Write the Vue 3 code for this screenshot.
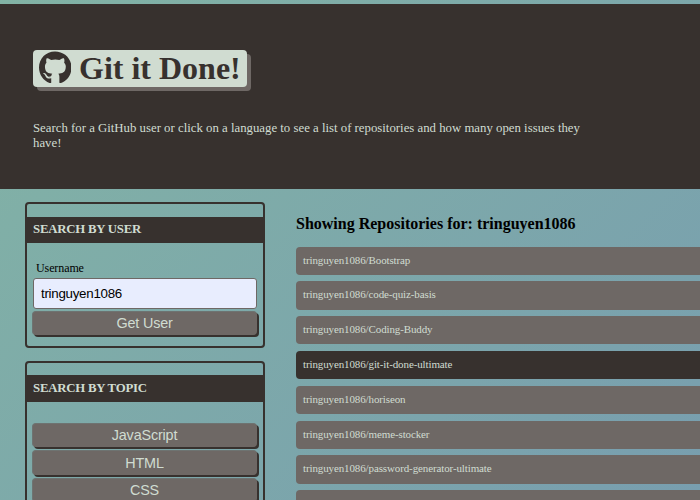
<script setup>
const topics = ['JavaScript', 'HTML', 'CSS']
const user = 'tringuyen1086'
const repos = [
  'Bootstrap',
  'code-quiz-basis',
  'Coding-Buddy',
  'git-it-done-ultimate',
  'horiseon',
  'meme-stocker',
  'password-generator-ultimate'
]
const active = 'git-it-done-ultimate'
</script>

<template>
  <div class="page">
    <header class="hero">
      <h1 class="title">
        <svg class="logo" viewBox="0 0 496 496" aria-hidden="true">
          <path fill="currentColor" d="M165.9 397.4c0 2-2.3 3.6-5.2 3.6-3.3.3-5.6-1.3-5.6-3.6 0-2 2.3-3.6 5.2-3.6 3-.3 5.6 1.3 5.6 3.6zm-31.1-4.5c-.7 2 1.3 4.3 4.3 4.9 2.6 1 5.6 0 6.2-2s-1.3-4.3-4.3-5.2c-2.6-.7-5.5.3-6.2 2.3zm44.2-1.7c-2.9.7-4.9 2.6-4.6 4.9.3 2 2.9 3.3 5.9 2.6 2.9-.7 4.9-2.6 4.6-4.6-.3-1.9-3-3.2-5.9-2.9zM244.8 8C106.1 8 0 113.3 0 252c0 110.9 69.8 205.8 169.5 239.2 12.8 2.3 17.3-5.6 17.3-12.1 0-6.2-.3-40.4-.3-61.4 0 0-70 15-84.7-29.8 0 0-11.4-29.1-27.8-36.6 0 0-22.9-15.7 1.6-15.4 0 0 24.9 2 38.6 25.8 21.9 38.6 58.6 27.5 72.9 20.9 2.3-16 8.8-27.1 16-33.7-55.9-6.2-112.3-14.3-112.3-110.5 0-27.5 7.6-41.3 23.6-58.9-2.6-6.5-11.1-33.3 2.6-67.9 20.9-6.5 69 27 69 27 20-5.6 41.5-8.5 62.8-8.5s42.8 2.9 62.8 8.5c0 0 48.1-33.6 69-27 13.7 34.7 5.2 61.4 2.6 67.9 16 17.7 25.8 31.5 25.8 58.9 0 96.5-58.9 104.2-114.8 110.5 9.2 7.9 17 22.9 17 46.4 0 33.7-.3 75.4-.3 83.6 0 6.5 4.6 14.4 17.3 12.1C428.2 457.8 496 362.9 496 252 496 113.3 383.5 8 244.8 8z" />
        </svg>
        <span>Git it Done!</span>
      </h1>
      <p class="lead">
        Search for a GitHub user or click on a language to see a list of repositories and how many open issues they have!
      </p>
    </header>

    <main class="content">
      <aside class="sidebar">
        <section class="card">
          <h3 class="card-title">SEARCH BY USER</h3>
          <form class="user-form" @submit.prevent>
            <label class="label" for="username">Username</label>
            <input id="username" class="input" type="text" :value="user" />
            <button class="btn" type="submit">Get User</button>
          </form>
        </section>
        <section class="card">
          <h3 class="card-title">SEARCH BY TOPIC</h3>
          <div class="topics">
            <button v-for="t in topics" :key="t" class="btn" type="button">{{ t }}</button>
          </div>
        </section>
      </aside>

      <section class="results">
        <h2 class="subtitle">Showing Repositories for: <span>{{ user }}</span></h2>
        <div class="list">
          <a v-for="r in repos" :key="r" class="repo" :class="{ active: r === active }">{{ user }}/{{ r }}</a>
          <a class="repo"></a>
        </div>
      </section>
    </main>
  </div>
</template>

<style>
body {
  margin: 0;
  overflow: hidden;
}
</style>

<style scoped>
* {
  box-sizing: border-box;
}
.page {
  height: 500px;
  overflow: hidden;
  padding-top: 4px;
  background: linear-gradient(135deg, #82b3a5 0%, #789eaf 100%);
  font-family: "Liberation Serif", "Times New Roman", serif;
  color: #000;
}
.hero {
  height: 185px;
  padding: 46px 33px 0;
  background: #37312e;
}
.title {
  display: flex;
  align-items: center;
  width: 214px;
  height: 37px;
  margin: 0;
  padding-left: 5.5px;
  gap: 8px;
  border-radius: 4px;
  background: #d0dcd1;
  box-shadow: 4px 4px 0 #6e6865;
  color: #37312e;
  font-size: 32px;
  line-height: 37px;
  white-space: nowrap;
}
.logo {
  flex: none;
  width: 32.5px;
  height: 32.5px;
  margin-bottom: 3.5px;
}
.lead {
  width: 560px;
  margin: 34px 0 0;
  color: #d0dcd1;
  font-size: 12.8px;
  line-height: 15px;
}
.content {
  display: flex;
  gap: 31px;
  padding: 13px 0 0 25px;
}
.sidebar {
  flex: none;
  width: 240px;
}
.card {
  height: 146px;
  margin-bottom: 13px;
  padding-top: 13px;
  border: 2px solid #37312e;
  border-radius: 4px;
}
.card + .card {
  height: 240px;
  padding-top: 12px;
}
.card-title {
  height: 26px;
  margin: 0;
  padding-left: 6px;
  background: #37312e;
  color: #d0dcd1;
  font-size: 12.8px;
  line-height: 24px;
  letter-spacing: -0.22px;
}
.card + .card .card-title {
  height: 27px;
  line-height: 26px;
}
.user-form {
  padding: 18px 6px 0;
}
.label {
  display: block;
  height: 17px;
  padding-left: 3px;
  font-size: 12px;
  line-height: 15px;
  letter-spacing: -0.1px;
}
.input {
  display: block;
  width: 224px;
  height: 31px;
  margin-bottom: 2px;
  padding: 0 7px;
  border: 1px solid #6e6865;
  border-radius: 3px;
  outline: none;
  background: #e8edfe;
  color: #000;
  font: 13.33px "Liberation Sans", Arial, sans-serif;
  letter-spacing: -0.27px;
}
.btn {
  display: block;
  width: 225px;
  height: 24.4px;
  margin: 0 0 0 -1px;
  padding: 0;
  border: 1px solid #6e7371;
  border-right-color: #6e6865;
  border-bottom-color: #6e6865;
  border-radius: 4px;
  background: #6e6865;
  box-shadow: 2px 2px 0 #37312e;
  color: #d0dcd1;
  font: 14.4px/22px "Liberation Sans", Arial, sans-serif;
  letter-spacing: -0.17px;
}
.topics {
  display: grid;
  gap: 3px;
  padding: 21px 6px 0;
}
.results {
  flex: 1;
  min-width: 0;
}
.subtitle {
  margin: 13px 0 0;
  font-size: 16px;
  line-height: 18px;
}
.list {
  display: grid;
  gap: 6.62px;
  padding-top: 13.6px;
}
.repo {
  height: 28.2px;
  padding-left: 7px;
  border-radius: 4px 0 0 4px;
  background: #6e6865;
  color: #d0dcd1;
  font-size: 11px;
  line-height: 27.6px;
  letter-spacing: -0.12px;
}
.repo.active {
  background: #37312e;
}
</style>
